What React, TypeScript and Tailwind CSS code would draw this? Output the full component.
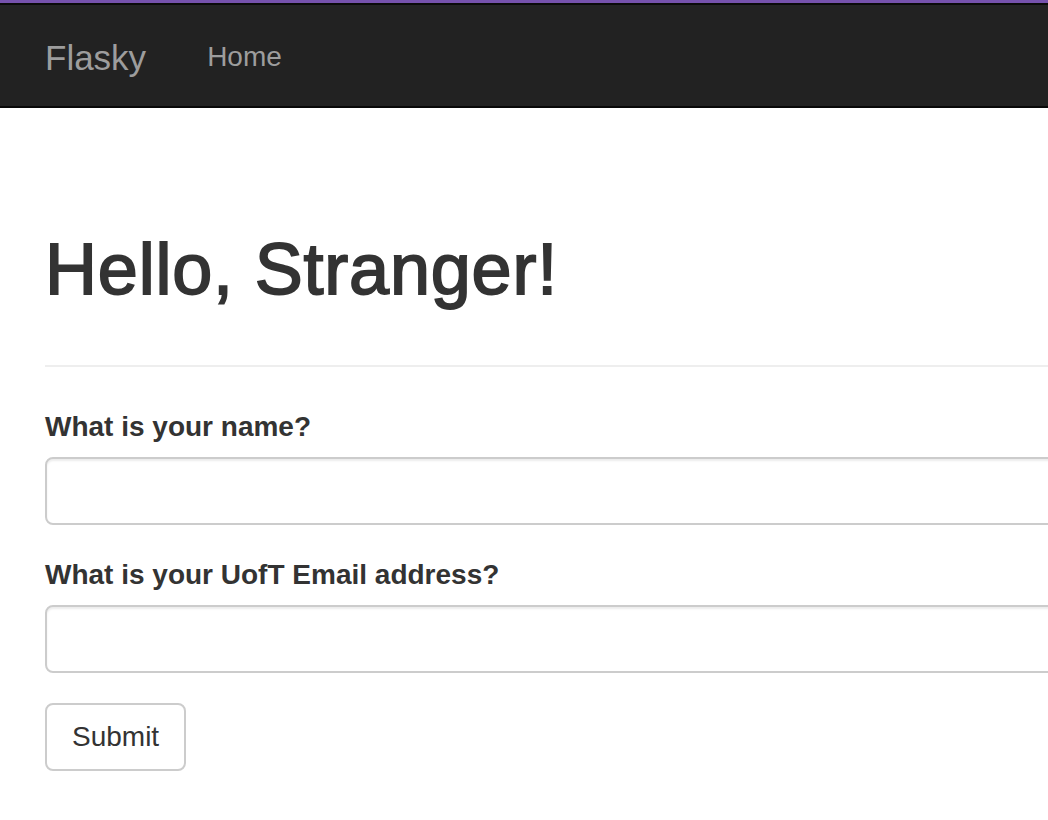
import React from "react";

export default function App() {
  return (
    <div
      className="w-[1048px] h-[820px] overflow-hidden bg-white text-[#333]"
      style={{ fontFamily: '"Liberation Sans", Arial, Helvetica, sans-serif' }}
    >
      <div className="h-[3px] bg-[#7652ad]" />
      <div className="h-[2px] bg-[#0a0a0a]" />
      <nav className="h-[101px] bg-[#222] flex items-center pl-[45px] pt-[3px]">
        <span className="text-[35px] leading-none text-[#9d9d9d]">Flasky</span>
        <span className="ml-[61px] text-[28px] leading-none text-[#9d9d9d]">Home</span>
      </nav>
      <div className="h-[2px] bg-[#080808]" />

      <main className="w-[1300px] pl-[45px] pt-[122px]">
        <h1 className="text-[72px] leading-[79px] font-normal tracking-[0.8px] text-[#333] [-webkit-text-stroke:1.8px_#333]">
          Hello, Stranger!
        </h1>
        <div className="mt-[56px] h-[2px] bg-[#eee]" />

        <form className="mt-[40px]" onSubmit={(e) => e.preventDefault()}>
          <div className="mb-[30px]">
            <label className="block text-[28px] leading-[40px] font-bold mb-[10px]">What is your name?</label>
            <input
              type="text"
              className="block w-full h-[68px] border-2 border-[#ccc] rounded-[8px] bg-white shadow-[inset_0_2px_2px_rgba(0,0,0,0.075)] outline-none"
            />
          </div>
          <div className="mb-[30px]">
            <label className="block text-[28px] leading-[40px] font-bold mb-[10px]">What is your UofT Email address?</label>
            <input
              type="text"
              className="block w-full h-[68px] border-2 border-[#ccc] rounded-[8px] bg-white shadow-[inset_0_2px_2px_rgba(0,0,0,0.075)] outline-none"
            />
          </div>
          <button
            type="submit"
            className="h-[68px] px-[25px] border-2 border-[#ccc] rounded-[8px] bg-white text-[28px] leading-[40px] text-[#333]"
          >
            Submit
          </button>
        </form>
      </main>
    </div>
  );
}
